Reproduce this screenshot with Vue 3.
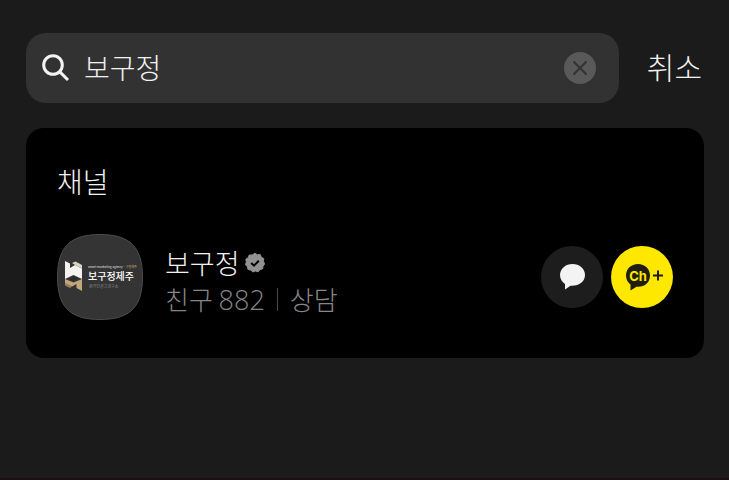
<template>
  <div class="page">
    <form class="search" @submit.prevent>
      <div class="search-box">
        <svg class="search-icon" viewBox="0 0 28 28" aria-hidden="true">
          <circle cx="11" cy="11" r="9.3" />
          <path d="M17.6 17.6 L26 26" />
        </svg>
        <input v-model="keyword" type="text" aria-label="검색">
        <button class="clear" type="button" aria-label="지우기" @click="keyword = ''">
          <svg viewBox="0 0 32 32" aria-hidden="true">
            <path d="M9.5 9.5 L22.5 22.5 M22.5 9.5 L9.5 22.5" />
          </svg>
        </button>
      </div>
      <button class="cancel" type="button">취소</button>
    </form>

    <section class="card">
      <h2>채널</h2>
      <ul>
        <li v-for="channel in channels" :key="channel.id">
          <svg class="avatar" viewBox="0 0 86 86" aria-hidden="true">
            <path class="avatar-bg" d="M43 .5 C73 .5 85.5 13 85.5 43 S73 85.5 43 85.5 .5 73 .5 43 13 .5 43 .5Z" />
            <path fill="#f4f2ee" d="M8 27 L13 29.500 V34 L18 31 L25 34.500 V45 L16.500 41 L8 45Z" />
            <path fill="#d9d2c5" d="M15 29 L18.500 27.500 L25 31 V34.500 L18 31Z" />
            <path fill="#c3a77c" d="M8 45 L16.500 48.500 L25 45 V57 L19.500 54 V50 L15 52.500 L8 49.500Z" />
            <path fill="#98805b" d="M8 49.500 L15 52.500 L13 54 L8 51.500Z" />
            <path fill="#2c2a28" d="M12 44.500 L16.500 42 L21 44.500 L16.500 47Z" />
            <text x="31" y="34" class="logo-top">smart marketing agency · <tspan fill="#b89b6c">구정제주</tspan></text>
            <text x="31" y="46" class="logo-name">보구정제주</text>
            <text x="32" y="54" class="logo-sub">온라인광고연구소</text>
          </svg>
          <div class="info">
            <p class="name">
              {{ channel.name }}
              <svg class="badge" viewBox="0 0 20 20" aria-hidden="true">
                <path fill="#929292" d="M10 .3 L12.400 1.800 L15.200 1.600 L16.300 4.200 L18.800 5.600 L18.400 8.400 L19.800 10.800 L18 13 L17.700 15.800 L15 16.600 L13.200 18.800 L10.500 18 L7.800 19 L5.800 17 L3 16.500 L2.400 13.700 L.4 11.700 L1.400 9 L.8 6.200 L3.200 4.700 L4.200 2 L7.100 2Z" stroke="#929292" stroke-linejoin="round" />
                <path class="check" d="M6.200 10 L9 12.700 L13.800 7.800" />
              </svg>
            </p>
            <p class="meta">
              <span>친구 <b>{{ channel.friends }}</b></span>
              <i></i>
              <span>{{ channel.category }}</span>
            </p>
          </div>
          <div class="actions">
            <button type="button" class="chat" aria-label="채팅">
              <svg viewBox="0 0 62 62" aria-hidden="true">
                <path fill="#f3f3f3" d="M31.500 18 C24.500 18 19 22.800 19 29 C19 33 21 36 24 38 V43.500 L29.500 39.700 C37.500 40.400 44 36 44 29 C44 22.800 38.500 18 31.500 18Z" />
              </svg>
            </button>
            <button type="button" class="add" aria-label="채널 추가">
              <svg viewBox="0 0 62 62" aria-hidden="true">
                <path fill="#211e0c" d="M27 18 C20 18 15 23 15 29.500 C15 33.500 16.800 36.500 19.500 38.500 V44.500 L25.500 40.700 C33.500 41.500 39 36.500 39 29.500 C39 23 34 18 27 18Z" />
                <text x="27" y="34.500">Ch</text>
                <path class="plus" d="M42 29.500 H52 M47 24.500 V34.500" />
              </svg>
            </button>
          </div>
        </li>
      </ul>
    </section>
  </div>
</template>

<script setup>
  import { ref } from 'vue'

  const keyword = ref('보구정')

  const channels = ref([
    {
      id: 1,
      name: '보구정',
      friends: 882,
      category: '상담'
    }
  ])
</script>

<style>
  body {
    margin: 0;
    background: #1b1b1b;
  }
</style>

<style scoped>
  .page {
    box-sizing: border-box;
    min-height: 100vh;
    padding: 33px 25px 0 26px;
    border-bottom: 2px solid #1a1014;
    background: #1b1b1b;
    color: #f2f2f2;
    font-family: "Noto Sans CJK KR", sans-serif;
    font-weight: 300;
  }

  button,
  input {
    padding: 0;
    border: none;
    outline: none;
    background: none;
    color: inherit;
    font: inherit;
  }

  button {
    cursor: pointer;
  }

  svg {
    display: block;
  }

  .search {
    display: flex;
    align-items: center;
    gap: 28px;
    padding-right: 2px;
  }

  .search-box {
    flex: 1;
    min-width: 0;
    display: flex;
    align-items: center;
    box-sizing: border-box;
    height: 70px;
    padding: 0 23px 0 16px;
    border-radius: 20px;
    background: #323232;
  }

  .search-icon {
    flex: none;
    width: 28px;
    height: 28px;
    fill: none;
    stroke: #f4f4f4;
    stroke-width: 3;
  }

  .search-box input {
    flex: 1;
    min-width: 0;
    height: 44px;
    margin-left: 14px;
    padding-bottom: 2px;
    font-size: 28px;
  }

  .clear {
    flex: none;
    width: 32px;
    height: 32px;
    border-radius: 50%;
    background: #595959;
  }

  .clear path {
    stroke: #323232;
    stroke-width: 2;
  }

  .cancel {
    flex: none;
    padding-bottom: 4px;
    font-size: 30px;
    line-height: 44px;
  }

  .card {
    margin-top: 25px;
    padding: 32px 31px 38px;
    border-radius: 18px;
    background: #000;
  }

  h2 {
    margin: 0;
    font-size: 28px;
    font-weight: 300;
    line-height: 42px;
  }

  ul {
    margin: 32px 0 0;
    padding: 0;
    list-style: none;
  }

  li {
    display: flex;
    align-items: center;
  }

  .avatar {
    flex: none;
    width: 86px;
    height: 86px;
  }

  .avatar-bg {
    fill: #343434;
    stroke: #4c4c4c;
  }

  .logo-top {
    fill: #d8d8d8;
    font-size: 3px;
    font-weight: 500;
  }

  .logo-name {
    fill: #fff;
    font-size: 10px;
    font-weight: 500;
  }

  .logo-sub {
    fill: #a0a0a0;
    font-size: 4px;
  }

  .info {
    flex: 1;
    min-width: 0;
    margin-left: 22px;
    padding-top: 8px;
  }

  .name,
  .meta {
    display: flex;
    align-items: center;
    margin: 0;
    line-height: 36px;
    white-space: nowrap;
  }

  .name {
    gap: 5px;
    font-size: 27px;
  }

  .badge {
    width: 20px;
    height: 20px;
  }

  .check {
    fill: none;
    stroke: #000;
    stroke-width: 2;
  }

  .meta {
    gap: 12px;
    color: #868686;
    font-size: 26px;
  }

  .meta b {
    font-family: "Open Sans", "Noto Sans", sans-serif;
    font-size: 27px;
    font-weight: 300;
  }

  .meta i {
    width: 1px;
    height: 23px;
    background: #4a4a4a;
  }

  .actions {
    display: flex;
    gap: 8px;
  }

  .actions button {
    width: 62px;
    height: 62px;
    border-radius: 50%;
  }

  .chat {
    background: #1d1d1d;
  }

  .add {
    background: #fee800;
  }

  .add text {
    fill: #fee800;
    font-family: Inter, sans-serif;
    font-size: 13px;
    font-weight: 700;
    text-anchor: middle;
  }

  .plus {
    stroke: #211e0c;
    stroke-width: 2;
  }
</style>
